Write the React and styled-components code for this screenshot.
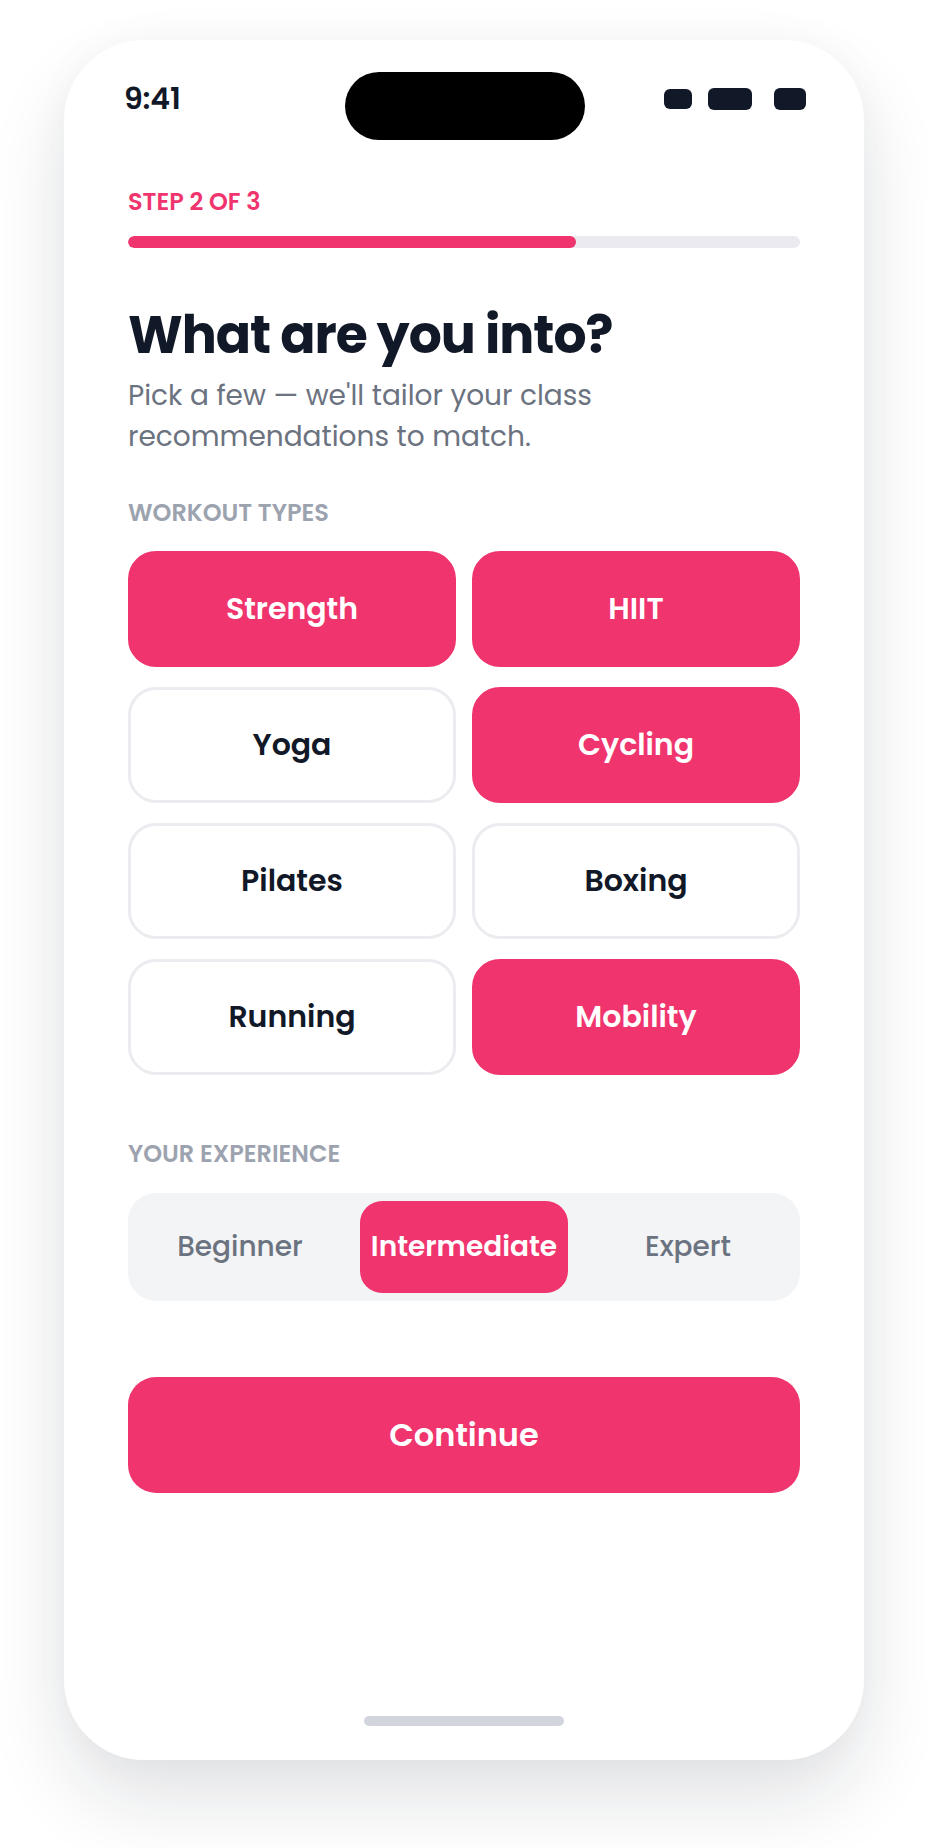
import React, { useState } from "react";
import styled, { createGlobalStyle } from "styled-components";

const GlobalStyle = createGlobalStyle`
  html, body {
    margin: 0;
    padding: 0;
    background: #ffffff;
  }
  body {
    font-family: "Poppins", "Inter", "Noto Sans", sans-serif;
    -webkit-font-smoothing: antialiased;
  }
  * {
    box-sizing: border-box;
  }
`;

const PINK = "#f0346e";
const INK = "#111827";

const workouts = [
  { name: "Strength", on: true },
  { name: "HIIT", on: true },
  { name: "Yoga", on: false },
  { name: "Cycling", on: true },
  { name: "Pilates", on: false },
  { name: "Boxing", on: false },
  { name: "Running", on: false },
  { name: "Mobility", on: true },
];

const levels = ["Beginner", "Intermediate", "Expert"];

export default function App() {
  const [picked, setPicked] = useState(
    workouts.filter((w) => w.on).map((w) => w.name)
  );
  const [level, setLevel] = useState("Intermediate");

  const toggle = (name) =>
    setPicked((p) =>
      p.includes(name) ? p.filter((n) => n !== name) : [...p, name]
    );

  return (
    <Page>
      <GlobalStyle />
      <Phone>
        <StatusBar>
          <Time>9:41</Time>
          <Island />
          <StatusIcons>
            <StatusIcon $w={28} $h={20} />
            <StatusIcon $w={44} $h={22} />
            <StatusIcon $w={32} $h={22} $ml={6} />
          </StatusIcons>
        </StatusBar>

        <Content>
          <StepLabel>Step 2 of 3</StepLabel>
          <ProgressTrack>
            <ProgressFill style={{ width: `${(2 / 3) * 100}%` }} />
          </ProgressTrack>

          <Title>What are you into?</Title>
          <Subtitle>
            Pick a few — we'll tailor your class recommendations to match.
          </Subtitle>

          <SectionLabel>Workout types</SectionLabel>
          <ChoiceGrid>
            {workouts.map((w) => (
              <Choice
                key={w.name}
                $selected={picked.includes(w.name)}
                onClick={() => toggle(w.name)}
              >
                {w.name}
              </Choice>
            ))}
          </ChoiceGrid>

          <SectionLabel $top={63}>Your experience</SectionLabel>
          <Segmented>
            {levels.map((l) => (
              <Segment
                key={l}
                $active={level === l}
                onClick={() => setLevel(l)}
              >
                {l}
              </Segment>
            ))}
          </Segmented>

          <PrimaryButton>Continue</PrimaryButton>
        </Content>

        <HomeIndicator />
      </Phone>
    </Page>
  );
}

const Page = styled.div`
  padding: 40px 0 88px;
  display: flex;
  justify-content: center;
`;

const Phone = styled.div`
  width: 800px;
  height: 1720px;
  background: #ffffff;
  border-radius: 80px;
  box-shadow: 0 40px 80px rgba(17, 24, 39, 0.12), 0 0 40px rgba(17, 24, 39, 0.03);
  display: flex;
  flex-direction: column;
  overflow: hidden;
`;

const StatusBar = styled.div`
  display: grid;
  grid-template-columns: 1fr 240px 1fr;
  align-items: start;
  padding: 32px 58px 0 60px;
`;

const Time = styled.div`
  margin-top: 5px;
  font-size: 30px;
  line-height: 44px;
  font-weight: 600;
  color: ${INK};
  letter-spacing: -0.2px;
`;

const Island = styled.div`
  width: 240px;
  height: 68px;
  border-radius: 34px;
  background: #000000;
`;

const StatusIcons = styled.div`
  justify-self: end;
  margin-top: 16px;
  height: 22px;
  display: flex;
  align-items: center;
  gap: 16px;
`;

const StatusIcon = styled.span`
  display: block;
  width: ${(p) => p.$w}px;
  height: ${(p) => p.$h}px;
  margin-left: ${(p) => p.$ml || 0}px;
  border-radius: 6px;
  background: ${INK};
`;

const Content = styled.div`
  padding: 0 64px;
  display: flex;
  flex-direction: column;
`;

const StepLabel = styled.div`
  margin-top: 46px;
  font-size: 24px;
  line-height: 32px;
  font-weight: 600;
  letter-spacing: 0;
  text-transform: uppercase;
  color: ${PINK};
`;

const ProgressTrack = styled.div`
  margin-top: 18px;
  height: 12px;
  border-radius: 6px;
  background: #eaeaf0;
  overflow: hidden;
`;

const ProgressFill = styled.div`
  height: 100%;
  border-radius: 6px;
  background: ${PINK};
`;

const Title = styled.h1`
  margin: 56px 0 0;
  font-size: 52px;
  line-height: 62px;
  font-weight: 700;
  letter-spacing: -1px;
  color: ${INK};
`;

const Subtitle = styled.p`
  margin: 9px 0 0;
  max-width: 560px;
  font-size: 28px;
  line-height: 41px;
  font-weight: 400;
  color: #6b7280;
`;

const SectionLabel = styled.div`
  margin-top: ${(p) => p.$top || 40}px;
  font-size: 24px;
  line-height: 32px;
  font-weight: 600;
  letter-spacing: 0;
  text-transform: uppercase;
  color: #9ca3af;
`;

const ChoiceGrid = styled.div`
  margin-top: 22px;
  display: grid;
  grid-template-columns: 1fr 1fr;
  grid-auto-rows: 116px;
  gap: 20px 16px;
`;

const Choice = styled.button`
  display: flex;
  align-items: center;
  justify-content: center;
  border-radius: 28px;
  border: 3px solid ${(p) => (p.$selected ? PINK : "#ebebf0")};
  background: ${(p) => (p.$selected ? PINK : "#ffffff")};
  color: ${(p) => (p.$selected ? "#ffffff" : INK)};
  font-family: inherit;
  font-size: 30px;
  font-weight: 600;
  cursor: pointer;
`;

const Segmented = styled.div`
  margin-top: 23px;
  height: 108px;
  padding: 8px;
  display: grid;
  grid-template-columns: repeat(3, 1fr);
  gap: 16px;
  border-radius: 28px;
  background: #f3f4f6;
`;

const Segment = styled.button`
  border: none;
  border-radius: 22px;
  background: ${(p) => (p.$active ? PINK : "transparent")};
  color: ${(p) => (p.$active ? "#ffffff" : "#6b7280")};
  font-family: inherit;
  font-size: 28px;
  font-weight: ${(p) => (p.$active ? 600 : 500)};
  padding: 0;
  cursor: pointer;
`;

const PrimaryButton = styled.button`
  margin-top: 76px;
  height: 116px;
  border: none;
  border-radius: 28px;
  background: ${PINK};
  color: #ffffff;
  font-family: inherit;
  font-size: 32px;
  font-weight: 600;
  cursor: pointer;
`;

const HomeIndicator = styled.div`
  margin: auto auto 34px;
  width: 200px;
  height: 10px;
  border-radius: 5px;
  background: #d1d5db;
`;
